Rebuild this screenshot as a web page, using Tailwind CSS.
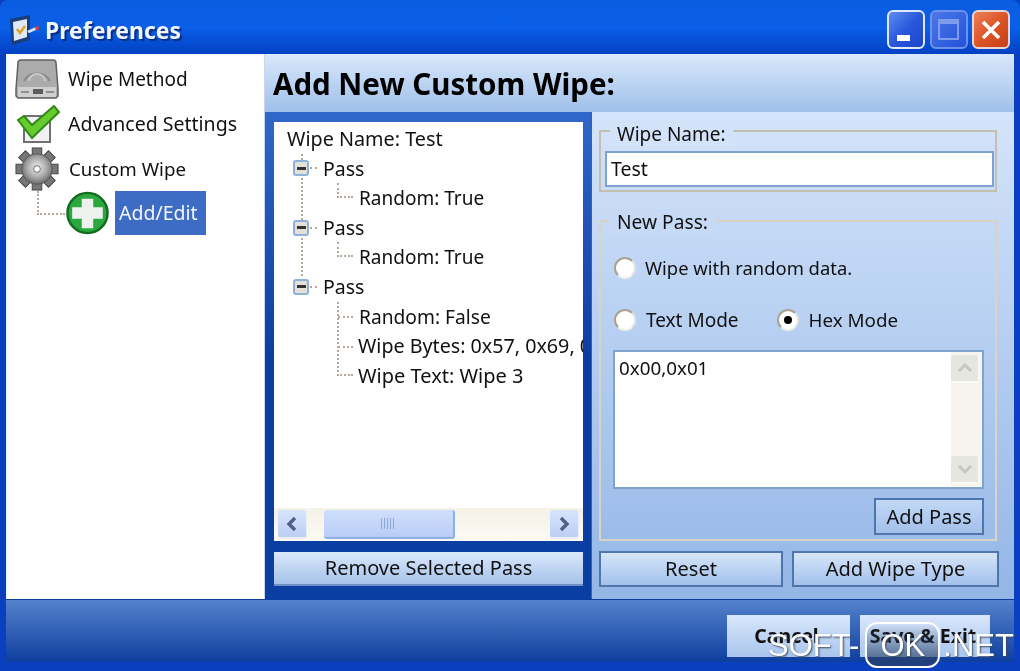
<!DOCTYPE html>
<html><head><meta charset="utf-8"><script src="https://cdn.jsdelivr.net/npm/@tailwindcss/browser@4"></script></head>
<body class="m-0 overflow-hidden">
<div class="relative w-[1020px] h-[671px] flex flex-col overflow-hidden bg-[#0a3fc0] font-['Noto_Sans','Liberation_Sans',sans-serif] text-[19.5px] leading-[28px] text-[#111] blur-[0.5px]">
  <!-- title bar -->
  <div class="h-[54px] shrink-0 flex items-center pt-[5px] pl-[10px] pr-[10px] rounded-t-lg bg-gradient-to-b from-[#0a5ce0] via-[#0b5fe8] to-[#0441c4]">
    <svg class="w-[30px] h-[30px] shrink-0" viewBox="0 0 30 30"><path d="M0 4L20 0v25L2 30z" fill="#1b3d78"/><path d="M3 7l14-3v18L4 26z" fill="#dfe8f6"/><path d="M7 14l3 4 5-7" fill="none" stroke="#e0a020" stroke-width="2.4"/><path d="M18 17l9-4" stroke="#d8e4f4" stroke-width="3"/><circle cx="27" cy="13" r="2" fill="#d84030"/></svg>
    <span class="ml-[5px] font-bold text-[23px] text-[#f2f6ff] [text-shadow:2px_2px_1px_#0b2f80]">Preferences</span>
    <div class="ml-auto flex gap-[4.5px]">
      <div class="relative w-[38px] h-[39px] rounded-[6px] border-2 border-[#dfe9fb] bg-gradient-to-br from-[#5f8cf0] via-[#2a58dc] to-[#1b46c8]"><div class="absolute left-[8px] bottom-[6px] w-[13px] h-[6px] bg-white"></div></div>
      <div class="w-[38px] h-[39px] rounded-[6px] border-2 border-[#6e92ea] bg-gradient-to-br from-[#4c78e8] to-[#2450d8] flex items-center justify-center"><div class="w-[21px] h-[21px] border-2 border-[#7d9cec] border-t-[5px]"></div></div>
      <div class="w-[38px] h-[39px] rounded-[6px] border-2 border-[#ead6cf] bg-gradient-to-br from-[#ec8058] via-[#dd5525] to-[#c53d18] flex items-center justify-center"><svg class="w-[24px] h-[24px]" viewBox="0 0 24 24"><path d="M4 4l16 16M20 4L4 20" stroke="#fff" stroke-width="3.6"/></svg></div>
    </div>
  </div>
  <!-- body -->
  <div class="h-[545px] shrink-0 mx-[6px] flex bg-white">
    <!-- nav -->
    <div class="w-[259px] shrink-0 pl-[8px] pt-[3px] border-l border-[#f0f4fc] border-r border-r-[#c9d6ea] bg-white">
      <div class="h-[44.67px] flex items-center">
        <svg class="w-[44px] h-[40px] shrink-0" viewBox="0 0 44 40"><path d="M6 1h32q3 0 3 3l2 26v7l-2 2H3l-2-2v-7L3 4q0-3 3-3z" fill="#ababab" stroke="#606060" stroke-width="1.5"/><path d="M9 22a14 12 0 0 1 26 0" fill="none" stroke="#8a8a8a" stroke-width="2"/><path d="M14 22a8 7 0 0 1 16 0" fill="none" stroke="#c8c8c8" stroke-width="2"/><rect x="3" y="28" width="38" height="10" fill="#cfcfcf"/><rect x="18" y="30" width="10" height="5" fill="#5c5c5c"/><rect x="6" y="32" width="8" height="2" fill="#8e8e8e"/><rect x="31" y="32" width="8" height="2" fill="#8e8e8e"/></svg>
        <span class="ml-[9px] text-[19px]">Wipe Method</span>
      </div>
      <div class="h-[44.67px] flex items-center">
        <svg class="w-[44px] h-[38px] shrink-0 ml-[1px]" viewBox="0 0 44 38"><rect x="8" y="11" width="26" height="26" fill="#f2f2f2" stroke="#707070" stroke-width="2"/><path d="M2 15l6-4 8 9L38 1l5 6-27 26z" fill="#66cc2e" stroke="#2f8a17" stroke-width="2"/></svg>
        <span class="ml-[8px]">Advanced Settings</span>
      </div>
      <div class="h-[44.67px] flex items-center">
        <svg class="w-[46px] h-[44px] shrink-0 -ml-[1px]" viewBox="0 0 46 46"><defs><radialGradient id="g" cx="50%" cy="45%" r="55%"><stop offset="0" stop-color="#eee"/><stop offset="0.6" stop-color="#a8a8a8"/><stop offset="1" stop-color="#6a6a6a"/></radialGradient></defs><g fill="#777" stroke="#444" stroke-width="1"><rect x="18" y="1" width="10" height="10"/><rect x="18" y="35" width="10" height="10"/><rect x="1" y="18" width="10" height="10"/><rect x="35" y="18" width="10" height="10"/><rect x="18" y="1" width="10" height="10" transform="rotate(45 23 23)"/><rect x="18" y="35" width="10" height="10" transform="rotate(45 23 23)"/><rect x="1" y="18" width="10" height="10" transform="rotate(45 23 23)"/><rect x="35" y="18" width="10" height="10" transform="rotate(45 23 23)"/></g><circle cx="23" cy="23" r="16" fill="url(#g)" stroke="#555"/><circle cx="23" cy="23" r="3.5" fill="#fff" stroke="#666"/></svg>
        <span class="ml-[9px] text-[18.7px]">Custom Wipe</span>
      </div>
      <div class="h-[44.67px] flex items-center">
        <div class="w-[28px] h-[24px] ml-[22px] mb-[21px] border-l-2 border-b-2 border-dotted border-[#b5a99a] shrink-0"></div>
        <svg class="w-[45px] h-[44px] shrink-0" viewBox="0 0 46 46"><circle cx="23" cy="23" r="21" fill="#2aa83e" stroke="#136b22" stroke-width="2.5"/><path d="M17 8h12v9h10v12H29v10H17V29H7V17h10z" fill="#eef2ee"/></svg>
        <span class="ml-[5px] w-[91px] h-[44px] bg-[#3d6cc4] text-[#f3f6fc] pl-[4px] flex items-center">Add/Edit</span>
      </div>
    </div>
    <!-- right area -->
    <div class="flex-1 min-w-0 flex flex-col">
      <div class="h-[58px] shrink-0 flex items-center pl-[8px] pt-[2px] bg-gradient-to-b from-[#d9e8fb] to-[#9fbfe9] font-bold text-[29.5px] text-black">Add New Custom Wipe:</div>
      <div class="flex-1 min-h-0 flex">
        <!-- tree column -->
        <div class="w-[326px] shrink-0 bg-gradient-to-b from-[#3067c8] via-[#0b3ea1] to-[#0b3ea1] pl-[9px] pr-[8px] pt-[10px] flex flex-col">
          <div class="h-[419px] bg-white flex flex-col">
            <div class="relative flex-1 overflow-hidden pt-[2px] pl-[13px] leading-[29.6px] whitespace-nowrap">
              <div class="text-[19.8px]">Wipe Name: Test</div>
              <div class="absolute left-[27px] top-[32px] h-[122px] border-l-2 border-dotted border-[#b5a99a]"></div>
              <div class="absolute left-[63px] top-[61px] w-[16px] h-[15px] border-l-2 border-b-2 border-dotted border-[#b5a99a]"></div>
              <div class="absolute left-[63px] top-[120px] w-[16px] h-[15px] border-l-2 border-b-2 border-dotted border-[#b5a99a]"></div>
              <div class="absolute left-[63px] top-[180px] h-[74px] w-[16px] border-l-2 border-b-2 border-dotted border-[#b5a99a]"></div>
              <div class="absolute left-[64px] top-[194px] w-[15px] border-b-2 border-dotted border-[#b5a99a]"></div>
              <div class="absolute left-[64px] top-[224px] w-[15px] border-b-2 border-dotted border-[#b5a99a]"></div>
              <div class="relative flex items-center pl-[6px]"><span class="w-[16px] h-[16px] rounded-[3px] border-2 border-[#8eb0de] bg-[#e4e0d6] flex items-center justify-center"><span class="w-[9px] h-[3px] bg-[#333]"></span></span><span class="w-[7px] ml-[1px] border-b-2 border-dotted border-[#b5a99a]"></span><span class="ml-[6px]">Pass</span></div>
              <div class="pl-[72px] text-[19px] pt-[1px] -mb-[1px]">Random: True</div>
              <div class="relative flex items-center pl-[6px]"><span class="w-[16px] h-[16px] rounded-[3px] border-2 border-[#8eb0de] bg-[#e4e0d6] flex items-center justify-center"><span class="w-[9px] h-[3px] bg-[#333]"></span></span><span class="w-[7px] ml-[1px] border-b-2 border-dotted border-[#b5a99a]"></span><span class="ml-[6px]">Pass</span></div>
              <div class="pl-[72px] text-[19px] pt-[1px] -mb-[1px]">Random: True</div>
              <div class="relative flex items-center pl-[6px]"><span class="w-[16px] h-[16px] rounded-[3px] border-2 border-[#8eb0de] bg-[#e4e0d6] flex items-center justify-center"><span class="w-[9px] h-[3px] bg-[#333]"></span></span><span class="w-[7px] ml-[1px] border-b-2 border-dotted border-[#b5a99a]"></span><span class="ml-[6px]">Pass</span></div>
              <div class="pl-[72px] text-[19.2px]">Random: False</div>
              <div class="pl-[71px] w-[305px] overflow-hidden text-[19.7px]">Wipe Bytes: 0x57, 0x69, 0x70</div>
              <div class="pl-[71px] text-[20px]">Wipe Text: Wipe 3</div>
            </div>
            <!-- scrollbar -->
            <div class="h-[33px] shrink-0 bg-gradient-to-b from-[#f4f1e6] to-[#fbfaf5] flex items-center px-[4px]">
              <div class="w-[29px] h-[29px] rounded-[3px] bg-gradient-to-b from-[#d7e4fb] to-[#bccff5] border-b-2 border-r border-[#e8eefa] flex items-center justify-center"><svg class="w-[14px] h-[16px]" viewBox="0 0 14 16"><path d="M10 2L4 8l6 6" fill="none" stroke="#4c5f84" stroke-width="3.4"/></svg></div>
              <div class="ml-[17px] w-[131px] h-[29px] rounded-[3px] bg-gradient-to-b from-[#cfdffb] to-[#b9cdf6] border-r-2 border-b-2 border-[#8fb0e6] flex items-center justify-center"><div class="w-[15px] h-[11px] bg-[repeating-linear-gradient(90deg,#8ea8d8_0_1px,transparent_1px_3px)]"></div></div>
              <div class="ml-auto w-[29px] h-[29px] rounded-[3px] bg-gradient-to-b from-[#d7e4fb] to-[#bccff5] border-b-2 border-r border-[#e8eefa] flex items-center justify-center"><svg class="w-[14px] h-[16px]" viewBox="0 0 14 16"><path d="M4 2l6 6-6 6" fill="none" stroke="#4c5f84" stroke-width="3.4"/></svg></div>
            </div>
          </div>
          <button class="mt-[11px] h-[34px] w-full text-[20px] bg-gradient-to-b from-[#dbe8fb] to-[#a5c2ea] border-b-2 border-[#6f90c4] text-[#111]">Remove Selected Pass</button>
        </div>
        <!-- right column -->
        <div class="flex-1 min-w-0 bg-gradient-to-b from-[#d4e4fa] to-[#94b6e6] border-l border-[#2f62c0] pl-[7px] pr-[15px] flex flex-col">
          <div class="relative h-[62px] shrink-0 border-2 border-[#c4bfae] mt-[18px] pt-[19px] pl-[4px] pr-[1px] mr-[2px]">
            <span class="absolute left-[9px] top-[-11px] px-[7px] bg-[#d2e2f9] leading-[26px] text-[19px]">Wipe Name:</span>
            <div class="h-[36px] bg-white border-2 border-[#7fa3cf] pl-[4px] leading-[32px]">Test</div>
          </div>
          <div class="relative h-[321px] shrink-0 mt-[28px] border-2 border-[#d8d3c4] mr-[2px] pl-[12px] pr-[11px] pt-[32px]">
            <span class="absolute left-[9px] top-[-13px] px-[7px] bg-[#c6daf5] leading-[26px] text-[19.2px]">New Pass:</span>
            <div class="flex items-center h-[28px] ml-[1px]">
              <span class="w-[22px] h-[22px] rounded-full bg-white border-2 border-[#a8a294] border-r-[#e6e6e0] border-b-[#f0f0ea]"></span>
              <span class="ml-[9px] text-[18.4px]">Wipe with random data.</span>
            </div>
            <div class="flex items-center h-[28px] mt-[24px] ml-[1px]">
              <span class="w-[22px] h-[22px] rounded-full bg-white border-2 border-[#a8a294] border-r-[#e6e6e0] border-b-[#f0f0ea]"></span>
              <span class="ml-[10px] text-[19px]">Text Mode</span>
              <span class="ml-[38px] w-[22px] h-[22px] rounded-full bg-white border-2 border-[#a8a294] border-r-[#e6e6e0] border-b-[#f0f0ea] flex items-center justify-center"><span class="w-[8px] h-[8px] rounded-full bg-black"></span></span>
              <span class="ml-[10px] text-[18.8px]">Hex Mode</span>
            </div>
            <div class="mt-[16px] h-[139px] bg-white border-2 border-[#7fa3cf] flex">
              <div class="flex-1 pl-[4px] pt-[2px] text-[18.8px]">0x00,0x01</div>
              <div class="w-[31px] shrink-0 py-[3px] pr-[3px] bg-[#f6f4ec] flex flex-col justify-between">
                <div class="h-[28px] rounded-[2px] bg-[#e6e6e0] border-b-2 border-r border-[#fafaf6] flex items-center justify-center"><svg class="w-[16px] h-[12px]" viewBox="0 0 16 12"><path d="M2 9l6-6 6 6" fill="none" stroke="#c6c8c0" stroke-width="3"/></svg></div>
                <div class="h-[28px] rounded-[2px] bg-[#e6e6e0] border-b-2 border-r border-[#fafaf6] flex items-center justify-center"><svg class="w-[16px] h-[12px]" viewBox="0 0 16 12"><path d="M2 3l6 6 6-6" fill="none" stroke="#c6c8c0" stroke-width="3"/></svg></div>
              </div>
            </div>
            <div class="flex justify-end mt-[9px]"><button class="w-[110px] h-[37px] text-[20px] bg-gradient-to-b from-[#c2d8f6] to-[#a3c0ea] border-2 border-[#4d76ad] text-[#111]">Add Pass</button></div>
          </div>
          <div class="flex justify-between mt-[10px]">
            <button class="w-[184px] h-[36px] text-[20px] bg-gradient-to-b from-[#d6e5fa] to-[#a3c1ec] border-2 border-[#4d76ad] text-[#111]">Reset</button>
            <button class="w-[207px] h-[36px] text-[20px] bg-gradient-to-b from-[#d6e5fa] to-[#a3c1ec] border-2 border-[#4d76ad] text-[#111]">Add Wipe Type</button>
          </div>
        </div>
      </div>
    </div>
  </div>
  <!-- footer -->
  <div class="h-[63px] shrink-0 mx-[6px] bg-gradient-to-b from-[#5482cc] to-[#0e3e9e] border-t border-[#0b3ea1] flex justify-end items-start pt-[15px] pr-[24px] gap-[10px] font-bold">
    <button class="w-[123px] h-[42px] pr-[4px] bg-gradient-to-b from-[#d9e7fb] to-[#a9c5ec] text-[#111]">Cancel</button>
    <button class="w-[130px] h-[42px] pr-[4px] bg-gradient-to-b from-[#d9e7fb] to-[#a9c5ec] text-[#111]">Save &amp; Exit</button>
  </div>
  <!-- watermark -->
  <div class="absolute left-[768px] top-[622px] h-[46px] flex items-center text-[31px] leading-none text-white font-['Liberation_Sans',sans-serif] [text-shadow:1px_1px_2px_#3a4a60]">
    <span>SOFT-</span><span class="ml-[6px] w-[75px] h-[46px] flex items-center justify-center rounded-[12px] border-2 border-white bg-gradient-to-b from-transparent to-[#2a3f66]/80">OK</span><span class="ml-[3px]">.NET</span>
  </div>
</div>
</body></html>
